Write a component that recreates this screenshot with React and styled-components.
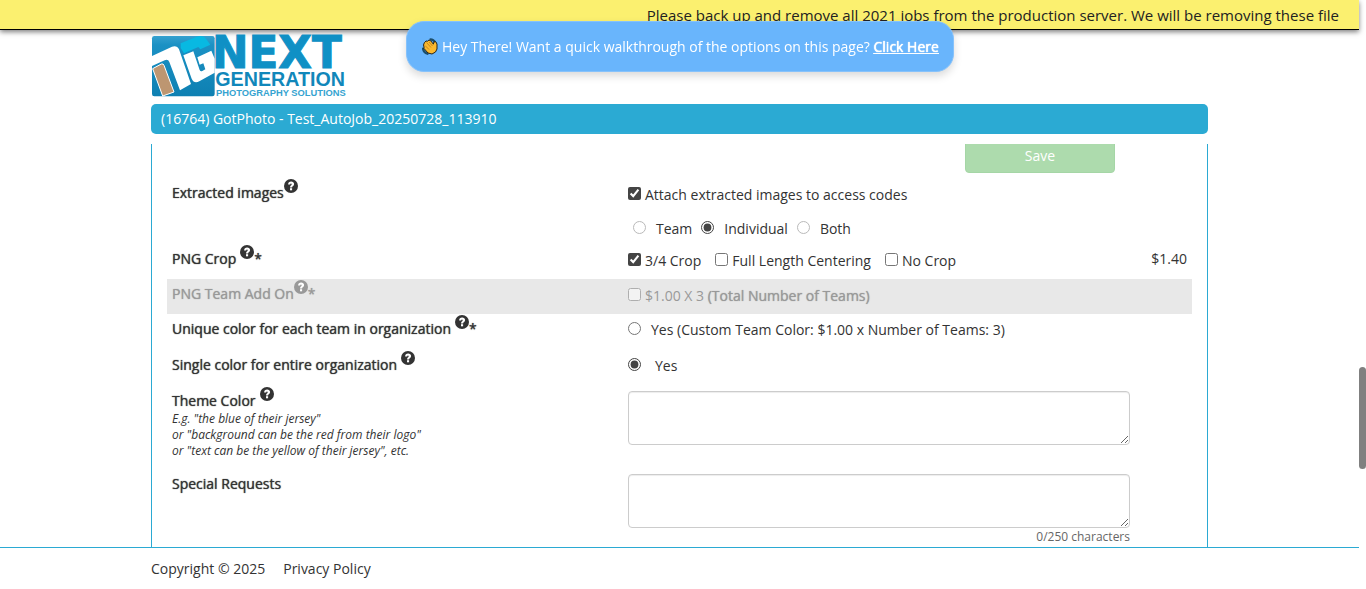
import React from 'react';
import styled, { createGlobalStyle } from 'styled-components';

const Global = createGlobalStyle`
  * { box-sizing: border-box; }
  body {
    margin: 0;
    background: #fff;
    color: #333;
    font-family: "Open Sans", sans-serif;
    font-size: 14px;
    line-height: 20px;
  }
`;

const Page = styled.div`
  height: 100vh;
  display: flex;
  flex-direction: column;
  padding-right: 7px;
  overflow: hidden;
`;

const Notice = styled.div`
  flex: none;
  height: 30px;
  padding: 5px 20px 0 0;
  background: #fbf06f;
  border-bottom: 1px solid #000;
  box-shadow: 0 2px 5px rgba(0, 0, 0, 0.5);
  color: #222;
  font-size: 15px;
  text-align: right;
  white-space: nowrap;
`;

const Walkthrough = styled.div`
  position: fixed;
  top: 21px;
  left: calc(50% - 277px);
  height: 51px;
  padding: 0 14px 0 15px;
  border: 1px solid #86c2fb;
  border-radius: 18px;
  background: #69b5fc;
  box-shadow: 0 4px 8px rgba(0, 0, 0, 0.15);
  color: #fff;
  display: flex;
  align-items: center;
  gap: 4px;
  white-space: nowrap;

  a {
    color: #fff;
    text-shadow: 0 0 1px currentColor, 0 0 1px currentColor;
  }
`;

const Header = styled.header`
  flex: none;
  margin: 6px 151px 0;
  display: flex;
  flex-direction: column;
  gap: 7px;
`;

const TitleBar = styled.h1`
  margin: 0;
  padding: 5px 10px;
  border-radius: 5px;
  background: #2baad3;
  color: #fff;
  font-size: 14px;
  font-weight: 400;
  line-height: 20px;
`;

const Panel = styled.main`
  flex: 1;
  min-height: 0;
  margin: 10px 151px 0;
  padding: 0 15px;
  border: solid #2baad3;
  border-width: 0 1px;
  overflow: hidden;
`;

const Actions = styled.div`
  display: flex;
  justify-content: flex-end;
  margin: -5px 77px 5px 0;
`;

const SaveButton = styled.button`
  width: 150px;
  height: 34px;
  padding: 0;
  border: 1px solid #a5d6a6;
  border-radius: 4px;
  background: #addbad;
  color: #fff;
  font: inherit;
`;

const Row = styled.div`
  display: grid;
  grid-template-columns: 461fr 502fr 62fr;
  min-height: ${(p) => p.$height}px;
  padding-top: 5px;
  background: ${(p) => (p.$muted ? '#e8e8e8' : 'transparent')};
  color: ${(p) => (p.$muted ? '#999' : 'inherit')};
`;

const Label = styled.div`
  display: block;
  padding-left: 5px;
  text-shadow: 0 0 1px currentColor;
`;

const Strong = styled.span`
  text-shadow: 0 0 1px currentColor;
`;

const HelpIcon = styled.svg`
  width: 14px;
  height: 14px;
  margin: -8px 0 0 ${(p) => (p.$spaced ? 4 : 0)}px;
  vertical-align: 5px;
`;

const Hint = styled.div`
  padding-left: 5px;
  font-size: 12px;
  font-style: italic;
  line-height: 16px;
`;

const Lines = styled.div`
  display: flex;
  flex-direction: column;
  gap: 14px;
  padding-top: ${(p) => p.$top}px;
`;

const Options = styled.div`
  display: flex;
  gap: ${(p) => p.$gap}px;
  padding-left: ${(p) => p.$indent || 0}px;
`;

const Option = styled.label`
  display: flex;
  gap: ${(p) => p.$gap}px;
  white-space: pre;

  input {
    width: 13px;
    height: 13px;
    margin: 2px 0 0;
    accent-color: #444;
    opacity: ${(p) => (p.$faded ? 0.5 : 1)};
  }
`;

const Price = styled.div`
  padding-right: 5px;
  text-align: right;
`;

const TextBox = styled.textarea`
  display: block;
  width: 100%;
  height: 54px;
  padding: 6px 12px;
  border: 1px solid #ccc;
  border-radius: 4px;
  box-shadow: inset 0 1px 1px rgba(0, 0, 0, 0.075);
  font: inherit;
  resize: vertical;
`;

const Counter = styled.div`
  color: #666;
  font-size: 12px;
  line-height: 18px;
  text-align: right;
`;

const Footer = styled.footer`
  flex: none;
  height: 42px;
  padding: 11px 151px;
  border-top: 1px solid #2baad3;
  display: flex;
  gap: 18px;

  a { color: inherit; text-decoration: none; }
`;

const ScrollThumb = styled.div`
  position: fixed;
  top: 367px;
  right: 0;
  width: 7px;
  height: 102px;
  border-radius: 4px;
  background: #808080;
`;

const LogoMark = styled.svg`
  display: block;
  overflow: visible;
`;

const Help = ({ spaced }) => (
  <HelpIcon viewBox="0 0 14 14" $spaced={spaced} role="img" aria-label="Help">
    <circle cx="7" cy="7" r="7" fill="currentColor" />
    <path d="M4.1 5.4C4.2 3.5 5.4 2.6 7.1 2.6s3 .9 3 2.500c0 2-2 2-2 3.300H6c0-2.200 1.700-2.100 1.700-3.200 0-.4-.3-.6-.7-.6-.5 0-.8.3-.8.8z" fill="#fff" />
    <rect x="6" y="9.2" width="2.1" height="2.1" fill="#fff" />
  </HelpIcon>
);

const Wave = () => (
  <svg width="16" height="17" viewBox="0 0 16 17" aria-hidden="true">
    <path d="M8.5 1.3q3 0 5 3.600M1 10.500q.5 4 4.500 5.300" stroke="#1b4e6b" strokeWidth="2.2" fill="none" strokeLinecap="round" />
    <path d="M2.3 4.8L4 3l1.500.2L7 2l1.800 1L10 4.200l1.300 2L12 4l1.500-.5L15 6v5l-1.500 3-3.500 2-4-1-4-4.500V9L1.500 7z" fill="#fbb92f" stroke="#2b2619" strokeWidth="1" strokeLinejoin="round" />
    <path d="M4.5 4.500l4.500 5M7 4l3.500 4M3 7.500l4 4" stroke="#b97a1c" strokeWidth=".8" fill="none" />
  </svg>
);

const Logo = () => (
  <LogoMark width="195" height="61" viewBox="33 24 585 183" role="img" aria-label="Next Generation Photography Solutions">
    <defs>
      <linearGradient id="tile" x1="0" y1="0" x2="0" y2="1">
        <stop offset="0" stopColor="#35a0cf" />
        <stop offset="0.15" stopColor="#1b91c4" />
        <stop offset="1" stopColor="#0e80b2" />
      </linearGradient>
    </defs>
    <rect x="36" y="24" width="188" height="181" rx="7" fill="url(#tile)" />
    <path d="M36 84L96 56Q111 51 117 64L153 168L120 187L88 102Q84 92 74 97L36 114Z" fill="#fff" />
    <path d="M38 122L64 108Q70 106 72 112L102 192L68 204Z" fill="#bd9671" stroke="#fff" strokeWidth="3" />
    <path d="M122 46L170 26Q190 20 198 32L211 50L181 64L175 57L132 76L122 60Z" fill="#08b9e2" />
    <path d="M130 82L160 70L179 126Q182 132 187 129L196 124L190 106L179 110L172 88L214 68L224 92V134L178 160Q162 168 155 152Z" fill="#fff" />
    <g fontWeight="700">
      <text x="216" y="121" fill="#0f90c5" fontFamily="DejaVu Sans" stroke="#0f90c5" strokeWidth="3" fontSize="131">NEXT</text>
      <g fontFamily="Liberation Sans">
        <text x="226" y="174" fill="#1187ba" fontSize="59">GENERATION</text>
        <text x="228" y="203" fill="#35a3d0" fontSize="28">PHOTOGRAPHY SOLUTIONS</text>
      </g>
    </g>
  </LogoMark>
);

export default function App() {
  return (
    <>
      <Global />
      <Page>
        <Notice>Please back up and remove all 2021 jobs from the production server. We will be removing these file</Notice>
        <Header>
          <Logo />
          <TitleBar>(16764) GotPhoto - Test_AutoJob_20250728_113910</TitleBar>
        </Header>
        <Panel>
          <Actions><SaveButton type="button">Save</SaveButton></Actions>
          <Row $height={66}>
            <Label>Extracted images<Help /></Label>
            <Lines $top={2}>
              <Option $gap={4}><input type="checkbox" defaultChecked />Attach extracted images to access codes</Option>
              <Options $gap={9} $indent={5}>
                <Option $gap={10} $faded><input type="radio" name="extract" />Team</Option>
                <Option $gap={10}><input type="radio" name="extract" defaultChecked />Individual</Option>
                <Option $gap={10} $faded><input type="radio" name="extract" />Both</Option>
              </Options>
            </Lines>
          </Row>
          <Row $height={35}>
            <Label>PNG Crop<Help spaced />*</Label>
            <Lines $top={2}>
              <Options $gap={14}>
                <Option $gap={4}><input type="checkbox" defaultChecked />3/4 Crop</Option>
                <Option $gap={4}><input type="checkbox" />Full Length Centering</Option>
                <Option $gap={4}><input type="checkbox" />No Crop</Option>
              </Options>
            </Lines>
            <Price>$1.40</Price>
          </Row>
          <Row $height={35} $muted>
            <Label>PNG Team Add On<Help />*</Label>
            <Lines $top={2}>
              <Option $gap={4} $faded><input type="checkbox" /><span>$1.00 X 3 <Strong>(Total Number of Teams)</Strong></span></Option>
            </Lines>
          </Row>
          <Row $height={36}>
            <Label>Unique color for each team in organization<Help spaced />*</Label>
            <Lines $top={1}>
              <Option $gap={10}><input type="radio" name="unique" />Yes (Custom Team Color: $1.00 x Number of Teams: 3)</Option>
            </Lines>
          </Row>
          <Row $height={36}>
            <Label>Single color for entire organization<Help spaced /></Label>
            <Lines $top={1}>
              <Option $gap={14}><input type="radio" name="single" defaultChecked />Yes</Option>
            </Lines>
          </Row>
          <Row $height={83}>
            <div>
              <Label as="label" htmlFor="theme">Theme Color<Help spaced /></Label>
              <Hint>E.g. "the blue of their jersey"<br />or "background can be the red from their logo"<br />or "text can be the yellow of their jersey", etc.</Hint>
            </div>
            <TextBox id="theme" />
          </Row>
          <Row $height={83}>
            <Label as="label" htmlFor="requests">Special Requests</Label>
            <div>
              <TextBox id="requests" />
              <Counter>0/250 characters</Counter>
            </div>
          </Row>
        </Panel>
        <Footer>
          <span>Copyright © 2025</span>
          <a href="#privacy">Privacy Policy</a>
        </Footer>
      </Page>
      <Walkthrough>
        <Wave />
        <span>Hey There! Want a quick walkthrough of the options on this page? <a href="#walkthrough">Click Here</a></span>
      </Walkthrough>
      <ScrollThumb />
    </>
  );
}
